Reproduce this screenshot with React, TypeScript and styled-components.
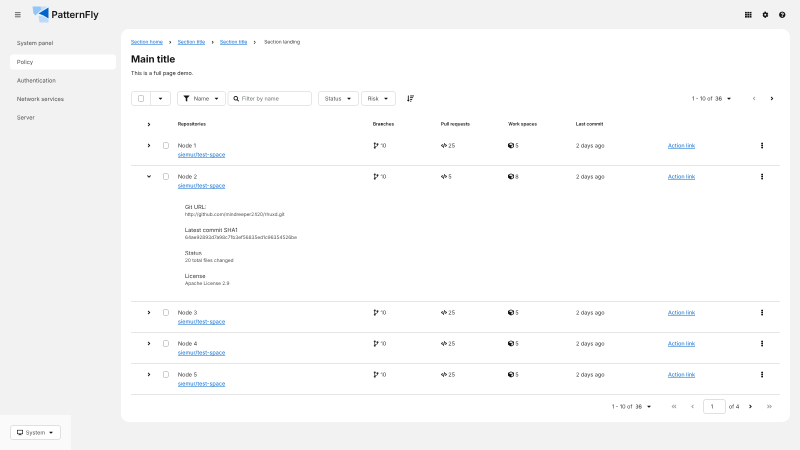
import React from "react";
import styled, { createGlobalStyle } from "styled-components";
import {
  FaBars, FaTh, FaCog, FaQuestionCircle, FaFilter, FaSearch, FaSortAmountDown, FaCaretDown,
  FaAngleRight, FaAngleDown, FaAngleLeft, FaAngleDoubleLeft, FaAngleDoubleRight, FaEllipsisV,
  FaDesktop, FaCodeBranch, FaCode, FaCube,
} from "react-icons/fa";

const Global = createGlobalStyle`
  html, body { margin: 0; padding: 0; background: #f2f2f2; height: 450px; overflow: hidden; }
  body {
    font-family: "Inter", "Noto Sans", sans-serif; color: #151515; width: 800px;
    text-rendering: geometricPrecision;
  }
  * { box-sizing: border-box; }
`;

const Viewport = styled.div`
  width: 800px; height: 450px; overflow: hidden; position: relative; contain: strict;
`;
/* The page is laid out at 1600x900 and shown at half size, as in the reference. */
const Shell = styled.div`
  width: 1600px; height: 900px; display: grid;
  grid-template-columns: 242px 1338px; grid-template-rows: 58px 786px;
  background: #f2f2f2; position: relative;
  transform: scale(0.5); transform-origin: 0 0; will-change: transform;
`;
const Masthead = styled.header`
  grid-column: 1 / 3; display: flex; align-items: center; padding: 0 9px 0 29px;
`;
const IconBtn = styled.span<{ $size?: number; $muted?: boolean; $soft?: boolean }>`
  display: inline-flex; align-items: center; justify-content: center;
  font-size: ${(p) => p.$size ?? 14}px;
  color: ${(p) => (p.$muted ? "#a3a3a3" : p.$soft ? "#555" : "#151515")};
`;
const Brand = styled.div`
  display: flex; align-items: center; gap: 6px; margin-left: 23px;
`;
const BrandName = styled.span`
  font-size: 19.2px; font-weight: 600; color: #151515;
`;
const Tools = styled.div`
  margin-left: auto; display: flex; align-items: center; gap: 21px;
`;
const Side = styled.nav`
  padding: 13.4px 10px 0 20px; display: flex; flex-direction: column;
`;
const NavItem = styled.div<{ $active?: boolean }>`
  height: 30px; margin-bottom: 7.2px; display: flex; align-items: center; padding-left: 14px;
  font-size: 11.3px; color: #4d4d4d; border-radius: 6px;
  background: ${(p) => (p.$active ? "#fff" : "transparent")};
`;
const Card = styled.main`
  background: #fff; border-radius: 16px; padding: 19px 20px 0;
`;
const Crumbs = styled.div`
  display: flex; align-items: center; font-size: 9.8px; height: 14px; color: #333;
`;
const A = styled.a<{ $size?: number }>`
  color: #0066cc; text-decoration: underline; text-decoration-thickness: 1px; text-underline-offset: 1.6px;
  font-size: ${(p) => p.$size ?? 9.8}px;
`;
const CrumbSep = styled(IconBtn)`
  width: 30px; font-size: 9px;
`;
const CrumbLast = styled.span` padding-left: 4px; `;
const Title = styled.h1`
  margin: 12px 0 0; font-size: 19.6px; line-height: 30px; font-weight: 700; color: #151515;
`;
const Sub = styled.p`
  margin: 5px 0 0; font-size: 10.8px; line-height: 18px; color: #222;
`;
const Toolbar = styled.div`
  margin-top: 26px; height: 30px; display: flex; align-items: center;
`;
const Ctl = styled.div<{ $w: number; $ml?: number }>`
  width: ${(p) => p.$w}px; margin-left: ${(p) => p.$ml ?? 0}px; height: 30px; flex: none;
  border: 2px solid #e6e6e6; border-radius: 6px; display: flex; align-items: center; justify-content: center;
  gap: 9px; font-size: 11px; color: #4d4d4d;
`;
const SplitCtl = styled(Ctl)`
  justify-content: flex-start; gap: 0;
`;
const SplitPart = styled.div<{ $w: number; $div?: boolean }>`
  width: ${(p) => p.$w}px; height: 100%; display: flex; align-items: center; justify-content: center;
  ${(p) => p.$div && "border-left: 2px solid #e6e6e6;"}
`;
const Check = styled.span`
  display: block; flex: none; width: 11.4px; height: 11.4px; border: 1.2px solid #9a9a9a; border-radius: 2.4px; background: #fff;
`;
const SearchCtl = styled(Ctl)`
  justify-content: flex-start; padding-left: 10px; gap: 6px; color: #6a6e73;
`;
const Pager = styled.div`
  margin-left: auto; display: flex; align-items: center; font-size: 11px; color: #333; padding-right: 2px; white-space: nowrap;
`;
const Num = styled.b`
  font-weight: 500; margin-left: 5px;
`;
const Table = styled.div` margin-top: 16px; `;
const Row = styled.div<{ $h: number; $line?: boolean }>`
  display: grid; grid-template-columns: 60px 34px 390px 136px 134px 136px 184px 182px 42px;
  height: ${(p) => p.$h}px; font-size: 11px; color: #333;
  ${(p) => p.$line && "border-bottom: 2px solid #e6e6e6;"}
`;
const Cell = styled.div`
  padding-top: 12px; line-height: 18px;
`;
const ToggleCell = styled(Cell)`
  padding-left: 30px; display: flex; align-items: center; height: 30px;
`;
const CheckCell = styled(Cell)`
  padding-left: 4px; display: flex; align-items: center; height: 30px;
`;
const KebabCell = styled(Cell)`
  display: flex; align-items: center; height: 30px;
`;
const Head = styled(Cell)` font-size: 9.2px; font-weight: 600; color: #151515; `;
const Stat = styled(Cell)` display: flex; align-items: flex-start; gap: 2.5px; `;
const StatIcon = styled.span<{ $size: number }>`
  display: inline-flex; height: 18px; align-items: center; font-size: ${(p) => p.$size}px; color: #151515;
  svg { width: auto; }
`;
const Stack = styled.div` display: flex; flex-direction: column; `;
const Details = styled.div`
  padding: 31px 0 0 108px; height: 230px; border-bottom: 2px solid #e6e6e6;
`;
const DTitle = styled.div` font-size: 11.2px; line-height: 18px; color: #333; `;
const DText = styled.div` font-size: 9.5px; line-height: 14px; color: #4d4d4d; margin-bottom: 14px; `;
const BottomPager = styled.div`
  display: flex; align-items: center; height: 46px; font-size: 11px; color: #333; padding-left: 962px; white-space: nowrap;
`;
const PageInput = styled.div`
  width: 46px; height: 30px; border: 2px solid #e0e0e0; border-radius: 6px; display: flex; align-items: center;
  padding-left: 14px; margin: 0 6px 0 6.6px; flex: none;
`;
const Spot = styled.span<{ $ml?: number }>`
  width: 28px; flex: none; margin-left: ${(p) => p.$ml ?? 0}px; display: inline-flex; justify-content: center;
`;
const SortIcon = styled(IconBtn)` margin-left: 22px; `;
const SystemDock = styled.div`
  position: absolute; left: 0; bottom: 0; width: 142px; height: 70px; background: #fafafa;
  display: flex; align-items: center; padding-left: 20px;
`;
const SystemBtn = styled.div`
  width: 102px; height: 30px; background: #fff; border: 2px solid #e0e0e0; border-radius: 6px;
  display: flex; align-items: center; justify-content: center; gap: 6px; font-size: 11px; color: #4d4d4d;
`;

const Logo = () => (
  <svg width="32" height="32" viewBox="0 0 16 16">
    <polygon points="0,0 12,0 5,7 3,9 1,7" fill="#92c5f9" />
    <polygon points="8,0 15,0 9,5" fill="#c4e0f9" />
    <polygon points="16,1 16,12 11,9 6,7" fill="#0066cc" />
    <polygon points="6,9 11,10 16,13 16,16 7,16" fill="#b9dafc" />
  </svg>
);

const Toggle = ({ open }: { open?: boolean }) => (
  <ToggleCell>
    <IconBtn $size={12}>{open ? <FaAngleDown /> : <FaAngleRight />}</IconBtn>
  </ToggleCell>
);

const DataRow = ({ name, h, pr, ws, open }: { name: string; h: number; pr: number; ws: number; open?: boolean }) => (
  <Row $h={h} $line={!open}>
    <Toggle open={open} />
    <CheckCell><Check /></CheckCell>
    <Cell>
      <Stack>
        <span>{name}</span>
        <A $size={11}>siemur/test-space</A>
      </Stack>
    </Cell>
    <Stat><StatIcon $size={12.5}><FaCodeBranch /></StatIcon>10</Stat>
    <Stat><StatIcon $size={12}><FaCode /></StatIcon>{pr}</Stat>
    <Stat><StatIcon $size={12}><FaCube /></StatIcon>{ws}</Stat>
    <Cell>2 days ago</Cell>
    <Cell><A $size={11}>Action link</A></Cell>
    <KebabCell><IconBtn $size={12}><FaEllipsisV /></IconBtn></KebabCell>
  </Row>
);

const details: [string, string][] = [
  ["Git URL:", "http://github.com/mindreeper2420/rhuxd.git"],
  ["Latest commit SHA1", "64ae92893d7a98c71b3ef56835ed1c96354526be"],
  ["Status", "20 total files changed"],
  ["License", "Apache License 2.9"],
];

export default function App() {
  return (
    <Viewport>
      <Global />
      <Shell>
        <Masthead>
          <IconBtn $size={13} $soft><FaBars /></IconBtn>
          <Brand><Logo /><BrandName>PatternFly</BrandName></Brand>
          <Tools>
            <IconBtn $size={13}><FaTh /></IconBtn>
            <IconBtn $size={13}><FaCog /></IconBtn>
            <IconBtn $size={13}><FaQuestionCircle /></IconBtn>
          </Tools>
        </Masthead>
        <Side>
          <NavItem>System panel</NavItem>
          <NavItem $active>Policy</NavItem>
          <NavItem>Authentication</NavItem>
          <NavItem>Network services</NavItem>
          <NavItem>Server</NavItem>
        </Side>
        <Card>
          <Crumbs>
            <A>Section home</A><CrumbSep><FaAngleRight /></CrumbSep>
            <A>Section title</A><CrumbSep><FaAngleRight /></CrumbSep>
            <A>Section title</A><CrumbSep><FaAngleRight /></CrumbSep>
            <CrumbLast>Section landing</CrumbLast>
          </Crumbs>
          <Title>Main title</Title>
          <Sub>This is a full page demo.</Sub>
          <Toolbar>
            <SplitCtl $w={80}>
              <SplitPart $w={36}><Check /></SplitPart>
              <SplitPart $w={40} $div><IconBtn $size={12}><FaCaretDown /></IconBtn></SplitPart>
            </SplitCtl>
            <Ctl $w={98} $ml={12}><IconBtn $size={12}><FaFilter /></IconBtn>Name<IconBtn $size={12}><FaCaretDown /></IconBtn></Ctl>
            <SearchCtl $w={169} $ml={3}><IconBtn $size={11}><FaSearch /></IconBtn>Filter by name</SearchCtl>
            <Ctl $w={82} $ml={12}>Status<IconBtn $size={12}><FaCaretDown /></IconBtn></Ctl>
            <Ctl $w={70} $ml={4}>Risk<IconBtn $size={12}><FaCaretDown /></IconBtn></Ctl>
            <SortIcon $size={14}><FaSortAmountDown /></SortIcon>
            <Pager>
              1 - 10 of<Num>36</Num>
              <Spot><IconBtn $size={12}><FaCaretDown /></IconBtn></Spot>
              <Spot $ml={22}><IconBtn $size={12} $muted><FaAngleLeft /></IconBtn></Spot>
              <Spot $ml={8}><IconBtn $size={12}><FaAngleRight /></IconBtn></Spot>
            </Pager>
          </Toolbar>
          <Table>
            <Row $h={42}>
              <Toggle />
              <Cell />
              <Head>Repositories</Head>
              <Head>Branches</Head>
              <Head>Pull requests</Head>
              <Head>Work spaces</Head>
              <Head>Last commit</Head>
              <Cell /><Cell />
            </Row>
            <DataRow name="Node 1" h={62} pr={25} ws={5} />
            <DataRow name="Node 2" h={42} pr={5} ws={8} open />
            <Details>
              {details.map(([t, d]) => (
                <div key={t}>
                  <DTitle>{t}</DTitle>
                  <DText>{d}</DText>
                </div>
              ))}
            </Details>
            <DataRow name="Node 3" h={62} pr={25} ws={5} />
            <DataRow name="Node 4" h={62} pr={25} ws={5} />
            <DataRow name="Node 5" h={62} pr={25} ws={5} />
          </Table>
          <BottomPager>
            1 - 10 of<Num>36</Num>
            <Spot><IconBtn $size={12}><FaCaretDown /></IconBtn></Spot>
            <Spot $ml={22}><IconBtn $size={12} $muted><FaAngleDoubleLeft /></IconBtn></Spot>
            <Spot $ml={9.4}><IconBtn $size={12} $muted><FaAngleLeft /></IconBtn></Spot>
            <PageInput>1</PageInput>
            of 4
            <Spot $ml={8}><IconBtn $size={12}><FaAngleRight /></IconBtn></Spot>
            <Spot $ml={10}><IconBtn $size={12} $muted><FaAngleDoubleRight /></IconBtn></Spot>
          </BottomPager>
        </Card>
        <SystemDock>
          <SystemBtn><IconBtn $size={12}><FaDesktop /></IconBtn>System<IconBtn $size={12}><FaCaretDown /></IconBtn></SystemBtn>
        </SystemDock>
      </Shell>
    </Viewport>
  );
}
